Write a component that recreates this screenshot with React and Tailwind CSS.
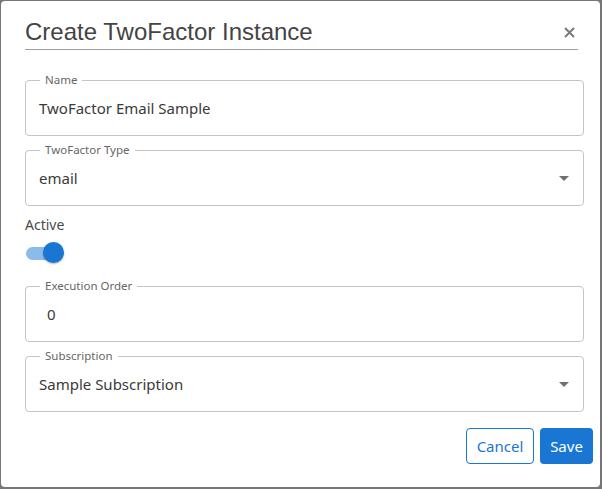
import React from "react";

function Field({ label, value, select, valueClass = "" }) {
  return (
    <div className="relative flex h-[56px] w-[559px] items-center rounded-[4px] border border-[#c4c4c4] pl-[13px] pr-[12px]">
      <span className="absolute left-[14px] top-[-9px] bg-white px-[5px] text-[11.5px] leading-[16px] text-[#666]">
        {label}
      </span>
      <span className={"flex-1 text-[15px] leading-[20px] text-[#3a3a3a] " + valueClass}>{value}</span>
      {select && (
        <svg width="24" height="24" viewBox="0 0 24 24" className="mr-[-5px]">
          <path d="M7 10l5 5 5-5z" fill="#707070" />
        </svg>
      )}
    </div>
  );
}

export default function App() {
  return (
    <div
      className="h-[489px] w-[602px] overflow-hidden bg-[#767676] pl-[1px] pt-[1px]"
      style={{ fontFamily: '"Noto Sans", "Open Sans", sans-serif' }}
    >
      <div className="flex h-[486px] w-[599px] flex-col rounded-[4px] bg-white">
        <div className="ml-[24px] flex w-[553px] items-center justify-between border-b border-[#a0a0a0] pb-[3px] pr-[3px] pt-[17px]">
          <h2
            className="text-[24px] leading-[28px] text-[#444]"
            style={{ fontFamily: '"Liberation Sans", Arial, sans-serif' }}
          >
            Create TwoFactor Instance
          </h2>
          <svg width="11" height="11" viewBox="0 0 11 11">
            <path d="M1 1L10 10M10 1L1 10" stroke="#7a7a7a" strokeWidth="2" />
          </svg>
        </div>

        <div className="flex flex-col pl-[24px]">
          <div className="mt-[30px]">
            <Field label="Name" value="TwoFactor Email Sample" />
          </div>
          <div className="mt-[14px]">
            <Field label="TwoFactor Type" value="email" select />
          </div>
          <div className="mt-[9px] text-[14px] leading-[20px] text-[#4a4a4a]">Active</div>
          <div className="relative mt-[7px] h-[21px] w-[40px]">
            <div className="absolute left-[1px] top-[5px] h-[13px] w-[34px] rounded-full bg-[#8cbbe9]" />
            <div className="absolute left-[18px] top-[0px] h-[21px] w-[21px] rounded-full bg-[#1976d2] shadow-[0_1px_2px_rgba(0,0,0,0.3)]" />
          </div>
          <div className="mt-[23px]">
            <Field label="Execution Order" value="0" valueClass="pl-[8px]" />
          </div>
          <div className="mt-[14px]">
            <Field label="Subscription" value="Sample Subscription" select />
          </div>
        </div>

        <div className="mt-[16px] flex justify-end gap-[6px] pr-[7px]">
          <button className="flex h-[36px] w-[68px] items-center justify-center rounded-[4px] border border-[#1976d2] bg-white text-[15px] text-[#1976d2]">
            Cancel
          </button>
          <button className="flex h-[36px] w-[53px] items-center justify-center rounded-[4px] bg-[#1976d2] text-[15px] text-white">
            Save
          </button>
        </div>
      </div>
    </div>
  );
}
